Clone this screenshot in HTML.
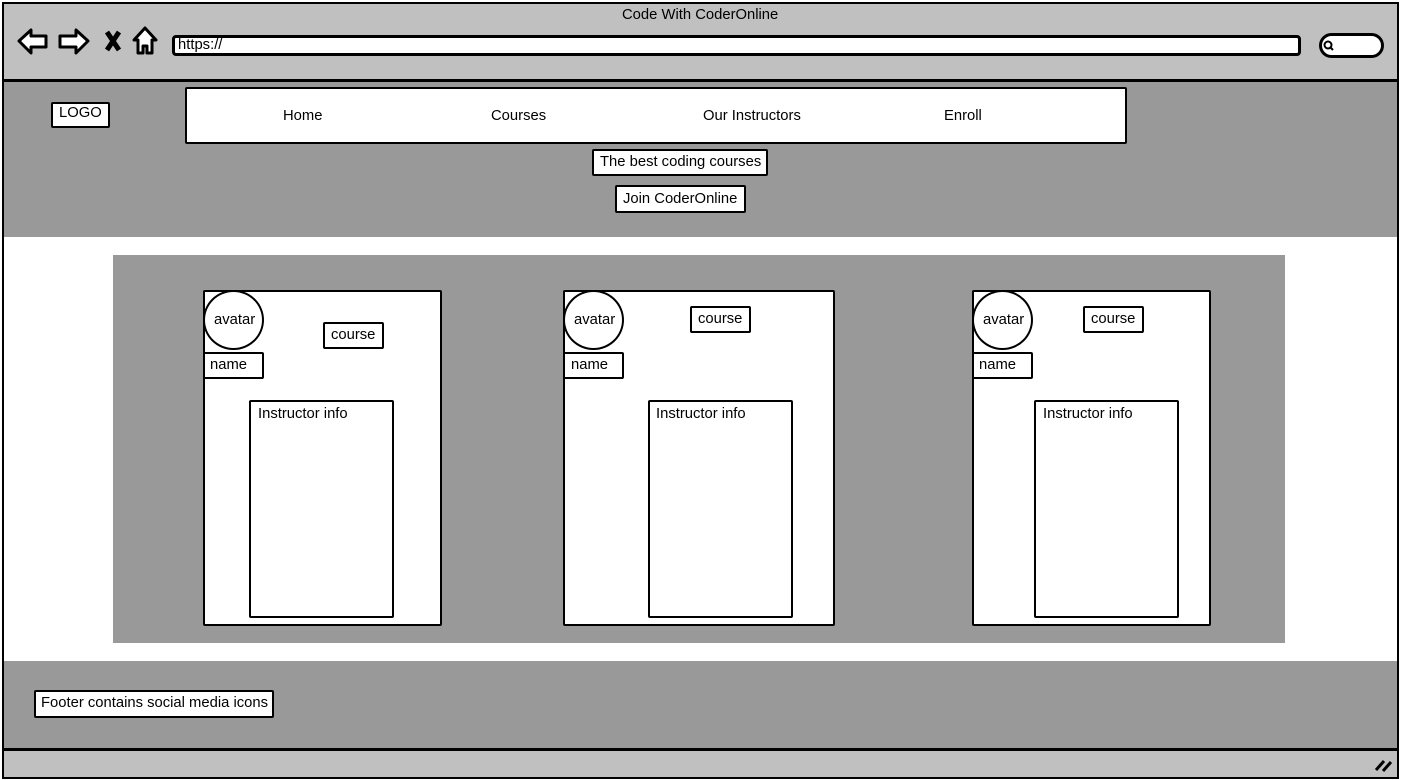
<!DOCTYPE html>
<html><head><meta charset="utf-8"><style>
*{margin:0;padding:0;box-sizing:border-box}
body{width:1401px;height:780px;background:#fff;position:relative;overflow:hidden;font-family:"Liberation Sans",sans-serif;font-size:14.8px;color:#000}
.a{position:absolute}
.b{position:absolute;background:#fff;border:2px solid #000;border-radius:2px}
.t{position:absolute;white-space:nowrap}
</style></head><body>
<div class="a" style="left:2px;top:2px;width:1397px;height:777px;border:2px solid #000;background:#fff"></div>
<div class="a" style="left:4px;top:4px;width:1393px;height:76px;background:#c0c0c0"></div>
<div class="a" style="left:2px;top:79px;width:1397px;height:3px;background:#000"></div>
<div class="t" style="left:622px;top:7px">Code With CoderOnline</div>
<svg class="a" style="left:15px;top:25px" width="150" height="32" viewBox="0 0 150 32">
<path d="M4 16 L16 5 L16 11 L31 11 L31 22 L16 22 L16 28 Z" fill="#fff" stroke="#000" stroke-width="3" stroke-linejoin="round"/>
<path d="M73 16 L61 5 L61 11 L45 11 L45 22 L61 22 L61 28 Z" fill="#fff" stroke="#000" stroke-width="3" stroke-linejoin="round"/>
<path d="M92 7 L104 25 M104 7 L92 25" stroke="#000" stroke-width="5"/>
<path d="M130 3 L141 15 L137 15 L137 28 L132 28 L132 21 L128 21 L128 28 L123 28 L123 15 L119 15 Z" fill="#fff" stroke="#000" stroke-width="3" stroke-linejoin="round"/>
</svg>
<div class="b" style="left:172px;top:35px;width:1129px;height:21px;border-width:3px;border-radius:4px"></div>
<div class="t" style="left:178px;top:37px">https://</div>
<div class="b" style="left:1319px;top:33px;width:65px;height:25px;border-width:3px;border-radius:13px"></div>
<svg class="a" style="left:1322px;top:39px" width="14" height="14"><circle cx="6" cy="6" r="3.5" fill="none" stroke="#000" stroke-width="2"/><path d="M8 8 L11 11" stroke="#000" stroke-width="2"/></svg>
<div class="a" style="left:4px;top:82px;width:1393px;height:155px;background:#999"></div>
<div class="b" style="left:51px;top:102px;width:59px;height:26px"></div>
<div class="t" style="left:59px;top:105px">LOGO</div>
<div class="b" style="left:185px;top:87px;width:942px;height:57px"></div>
<div class="t" style="left:283px;top:108px">Home</div>
<div class="t" style="left:491px;top:108px">Courses</div>
<div class="t" style="left:703px;top:108px">Our Instructors</div>
<div class="t" style="left:944px;top:108px">Enroll</div>
<div class="b" style="left:592px;top:149px;width:176px;height:27px"></div>
<div class="t" style="left:600px;top:154px">The best coding courses</div>
<div class="b" style="left:615px;top:185px;width:131px;height:28px"></div>
<div class="t" style="left:623px;top:191px">Join CoderOnline</div>
<div class="a" style="left:113px;top:255px;width:1172px;height:388px;background:#999"></div>

<div class="b" style="left:203px;top:290px;width:239px;height:336px"></div>
<div class="b" style="left:203px;top:290px;width:61px;height:60px;border-radius:50%"></div>
<div class="t" style="left:214px;top:312px">avatar</div>
<div class="b" style="left:323px;top:322px;width:61px;height:27px"></div>
<div class="t" style="left:331px;top:327px">course</div>
<div class="b" style="left:203px;top:352px;width:61px;height:27px"></div>
<div class="t" style="left:210px;top:357px">name</div>
<div class="b" style="left:249px;top:400px;width:145px;height:218px"></div>
<div class="t" style="left:258px;top:406px">Instructor info</div>

<div class="b" style="left:563px;top:290px;width:272px;height:336px"></div>
<div class="b" style="left:563px;top:290px;width:61px;height:60px;border-radius:50%"></div>
<div class="t" style="left:574px;top:312px">avatar</div>
<div class="b" style="left:690px;top:306px;width:61px;height:27px"></div>
<div class="t" style="left:698px;top:311px">course</div>
<div class="b" style="left:563px;top:352px;width:61px;height:27px"></div>
<div class="t" style="left:571px;top:357px">name</div>
<div class="b" style="left:648px;top:400px;width:145px;height:218px"></div>
<div class="t" style="left:656px;top:406px">Instructor info</div>

<div class="b" style="left:972px;top:290px;width:239px;height:336px"></div>
<div class="b" style="left:972px;top:290px;width:61px;height:60px;border-radius:50%"></div>
<div class="t" style="left:983px;top:312px">avatar</div>
<div class="b" style="left:1083px;top:306px;width:61px;height:27px"></div>
<div class="t" style="left:1091px;top:311px">course</div>
<div class="b" style="left:972px;top:352px;width:61px;height:27px"></div>
<div class="t" style="left:979px;top:357px">name</div>
<div class="b" style="left:1034px;top:400px;width:145px;height:218px"></div>
<div class="t" style="left:1043px;top:406px">Instructor info</div>

<div class="a" style="left:4px;top:661px;width:1393px;height:87px;background:#999"></div>
<div class="a" style="left:2px;top:748px;width:1397px;height:3px;background:#000"></div>
<div class="a" style="left:4px;top:751px;width:1393px;height:26px;background:#c0c0c0"></div>
<div class="b" style="left:34px;top:690px;width:240px;height:28px"></div>
<div class="t" style="left:41px;top:695px">Footer contains social media icons</div>
<svg class="a" style="left:1374px;top:757px" width="20" height="16"><path d="M2 13 L10 4 M9 14 L17 5" stroke="#000" stroke-width="3"/></svg>
</body></html>
